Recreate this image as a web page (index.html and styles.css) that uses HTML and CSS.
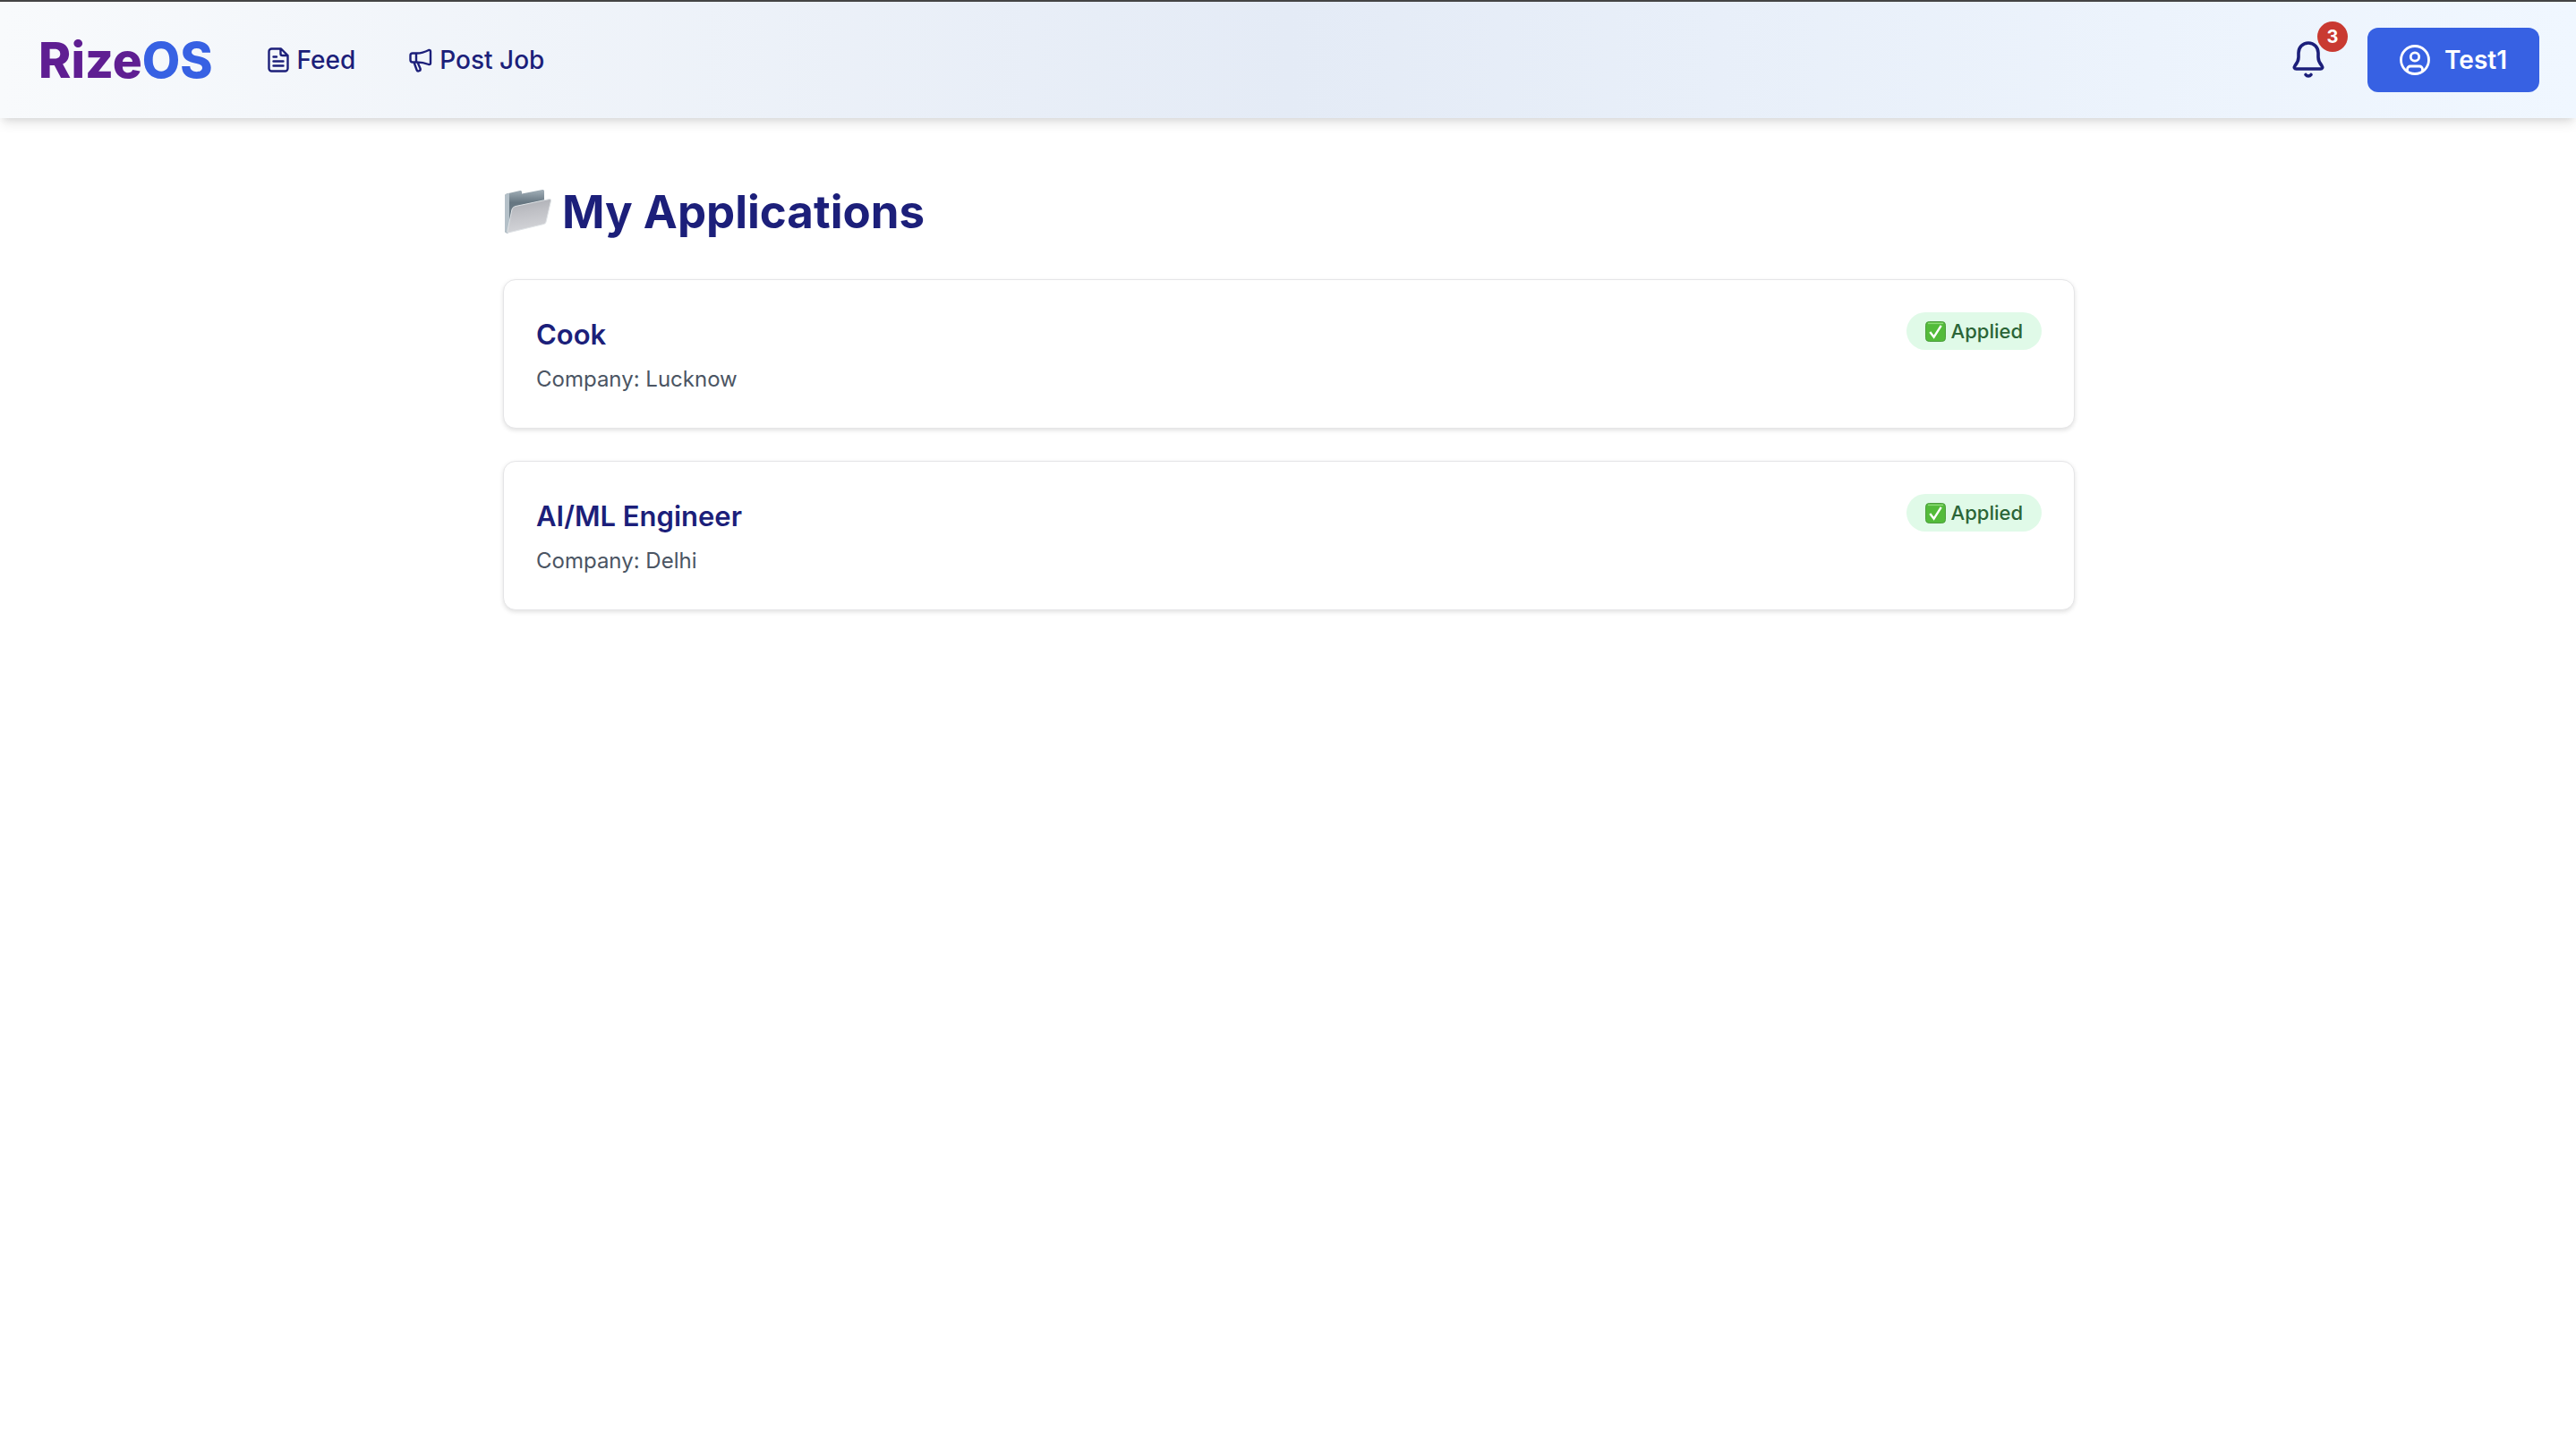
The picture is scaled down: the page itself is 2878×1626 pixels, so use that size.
FILE: index.html
```html
<!DOCTYPE html>
<html lang="en">
<head>
<meta charset="utf-8">
<meta name="viewport" content="width=device-width, initial-scale=1">
<title>RizeOS – My Applications</title>
<link rel="stylesheet" href="styles.css">
</head>
<body>
<header class="navbar">
  <a class="logo" href="#">Rize<span class="logo-accent">OS</span></a>
  <nav class="nav-links">
    <a class="nav-link" href="#">
      <svg class="nav-icon" viewBox="0 0 28 28" aria-hidden="true"><path d="M6.500 1.500H17L24.500 9v14.500a3 3 0 0 1-3 3h-15a3 3 0 0 1-3-3v-19a3 3 0 0 1 3-3zM16.500 1.500V7a2 2 0 0 0 2 2h6M8.500 10.500h3.500M8.500 15.500h11M8.500 20.500h11"/></svg>
      Feed
    </a>
    <a class="nav-link" href="#">
      <svg class="nav-icon" viewBox="0 0 28 28" aria-hidden="true"><path d="M10 6.500H5A2.500 2.500 0 0 0 2.500 9v5A2.500 2.500 0 0 0 5 16.500h5c5 0 9 1 13 2.500q2 .500 2-1.500v-13q0-2-2-1.500c-4 2-8 3.500-13 3.500zM9 6.500v10M6.500 16.500l3 8.500a2 2 0 0 0 4-1.500l-3-7"/></svg>
      Post Job
    </a>
  </nav>
  <div class="account">
    <button class="bell" type="button" aria-label="Notifications">
      <svg class="bell-icon" viewBox="0 0 40 44" aria-hidden="true"><path d="M20 3c-6.500 0-11 5-11 11v5c0 4-1.500 6.500-4 9.500-1.500 2-.5 3.500 1.500 3.500h27c2 0 3-1.500 1.500-3.500-2.500-3-4-5.500-4-9.500v-5c0-6-4.500-11-11-11zM17 38.500c1.500 2 4.500 2 6 0"/></svg>
      <span class="bell-count">3</span>
    </button>
    <button class="user-button" type="button">
      <svg class="user-icon" viewBox="0 0 34 34" aria-hidden="true"><circle cx="17" cy="17" r="15.500"/><circle cx="17" cy="13.500" r="4.700"/><path d="M8.500 29.500v-2a3.500 3.500 0 0 1 3.500-3.500h10a3.500 3.500 0 0 1 3.500 3.500v2"/></svg>
      Test1
    </button>
  </div>
</header>
<main class="page">
  <h1 class="page-title">
    <svg class="folder" viewBox="0 0 54 52" aria-hidden="true">
      <defs>
        <linearGradient id="folder-back" x1="0" y1="0" x2="0" y2="1"><stop offset="0" stop-color="#a3b0b9"/><stop offset=".3" stop-color="#667681"/><stop offset="1" stop-color="#7d8c96"/></linearGradient>
        <linearGradient id="folder-front" x1="0" y1="0" x2=".2" y2="1"><stop offset="0" stop-color="#a9abb1"/><stop offset=".45" stop-color="#bfc0c5"/><stop offset="1" stop-color="#d3d4d8"/></linearGradient>
      </defs>
      <path d="M1 8q0-2 2-2.500L18 2q2-.5 2 1.500v2L43 1q2-.5 2 1.500V34L4 49.500q-3 0-3-3z" fill="url(#folder-back)"/>
      <path d="M1 8q0-2 2-2.500l3-.7V48l-2 1.500q-3 0-3-3z" fill="#b4c0c8"/>
      <path d="M9 23q1-3 4-3.500L51 11.500q2 0 1.500 2L47 37q-.5 2-2.500 2.500L5 49q-1.500 0-1-2z" fill="url(#folder-front)" stroke="#dfe3e6"/>
    </svg>
    My Applications
  </h1>
  <ul class="applications">
    <li class="card">
      <div class="job">
        <h2 class="job-title">Cook</h2>
        <p class="company">Company: Lucknow</p>
      </div>
      <span class="status">
        <svg class="check" viewBox="0 0 24 24" aria-hidden="true"><rect x=".5" y=".5" width="23" height="23" rx="4" fill="#53bb3a" stroke="#4a9a3c"/><path d="M3 2.500h18" stroke="#8edb78" stroke-width="1.500"/><path d="M5.500 12.500l4.500 6L18.500 5" fill="none" stroke="#fff" stroke-width="2.500"/></svg>
        Applied
      </span>
    </li>
    <li class="card">
      <div class="job">
        <h2 class="job-title">AI/ML Engineer</h2>
        <p class="company">Company: Delhi</p>
      </div>
      <span class="status">
        <svg class="check" viewBox="0 0 24 24" aria-hidden="true"><rect x=".5" y=".5" width="23" height="23" rx="4" fill="#53bb3a" stroke="#4a9a3c"/><path d="M3 2.500h18" stroke="#8edb78" stroke-width="1.500"/><path d="M5.500 12.500l4.500 6L18.500 5" fill="none" stroke="#fff" stroke-width="2.500"/></svg>
        Applied
      </span>
    </li>
  </ul>
</main>
</body>
</html>
```
FILE: styles.css
```css
* { box-sizing: border-box; }

body {
  margin: 0;
  background: #fff;
  color: #1c1f7a;
  font-family: Inter, "Liberation Sans", sans-serif;
}

h1, h2, p, ul { margin: 0; padding: 0; }
a { color: inherit; text-decoration: none; }
button { border: 0; padding: 0; background: none; color: inherit; font: inherit; cursor: pointer; }
svg { display: block; flex: none; }

.navbar {
  display: flex;
  align-items: center;
  padding: 28px 41px 28px 43px;
  border-top: 2px solid #444;
  background: linear-gradient(to right, #f8fafc, #e4ebf6, #f0f7ff);
  box-shadow: 0 8px 12px -2px rgb(0 0 0 / 10%), 0 4px 8px -4px rgb(0 0 0 / 10%);
}

.logo {
  color: #5f1e92;
  font-size: 55px;
  font-weight: 800;
  line-height: 74px;
}
.logo-accent { color: #3761e3; }

.nav-links { display: flex; gap: 59px; margin-left: 59px; }
.nav-link {
  display: flex;
  align-items: center;
  gap: 7px;
  font-size: 28px;
  font-weight: 500;
  line-height: 48px;
}
.nav-icon { width: 28px; height: 28px; fill: none; stroke: currentColor; stroke-width: 2.4; stroke-linejoin: round; stroke-linecap: round; }

.account { display: flex; align-items: center; gap: 46px; margin-left: auto; }
.bell { position: relative; }
.bell-icon { width: 40px; height: 44px; fill: none; stroke: currentColor; stroke-width: 3.6; stroke-linejoin: round; stroke-linecap: round; }
.bell-count {
  position: absolute;
  top: -21px;
  right: -24px;
  width: 34px;
  height: 34px;
  border-radius: 50%;
  background: #c93a31;
  color: #fff;
  font-size: 20px;
  font-weight: 700;
  line-height: 34px;
}
.user-button {
  display: flex;
  align-items: center;
  gap: 16px;
  padding: 12px 36px;
  border-radius: 12px;
  background: #3761e3;
  color: #fff;
  font-size: 28px;
  font-weight: 600;
  line-height: 48px;
}
.user-icon { width: 34px; height: 34px; fill: none; stroke: currentColor; stroke-width: 2.8; }

.page { max-width: 1852px; margin: 0 auto; padding: 68px 47px 68px 49px; }
.page-title {
  display: flex;
  align-items: center;
  gap: 11px;
  padding-left: 1px;
  font-size: 51px;
  font-weight: 700;
  line-height: 74px;
}
.folder { width: 54px; height: 52px; }

.applications { display: grid; gap: 36px; margin-top: 38px; list-style: none; }
.card {
  display: flex;
  align-items: flex-start;
  justify-content: space-between;
  padding: 36px;
  border: 1px solid #e5e5e7;
  border-radius: 14px;
  background: #fff;
  box-shadow: 0 2px 5px rgb(0 0 0 / 12%);
}
.job-title { font-size: 31px; font-weight: 600; line-height: 50px; }
.company { margin-top: 7px; color: #4b5563; font-size: 24px; line-height: 36px; }
.status {
  display: flex;
  align-items: center;
  gap: 6px;
  padding: 5px 21px;
  border-radius: 22px;
  background: #e0fae8;
  color: #2b6537;
  font-size: 22px;
  font-weight: 500;
  line-height: 32px;
}
.check { width: 23px; height: 23px; }
```
